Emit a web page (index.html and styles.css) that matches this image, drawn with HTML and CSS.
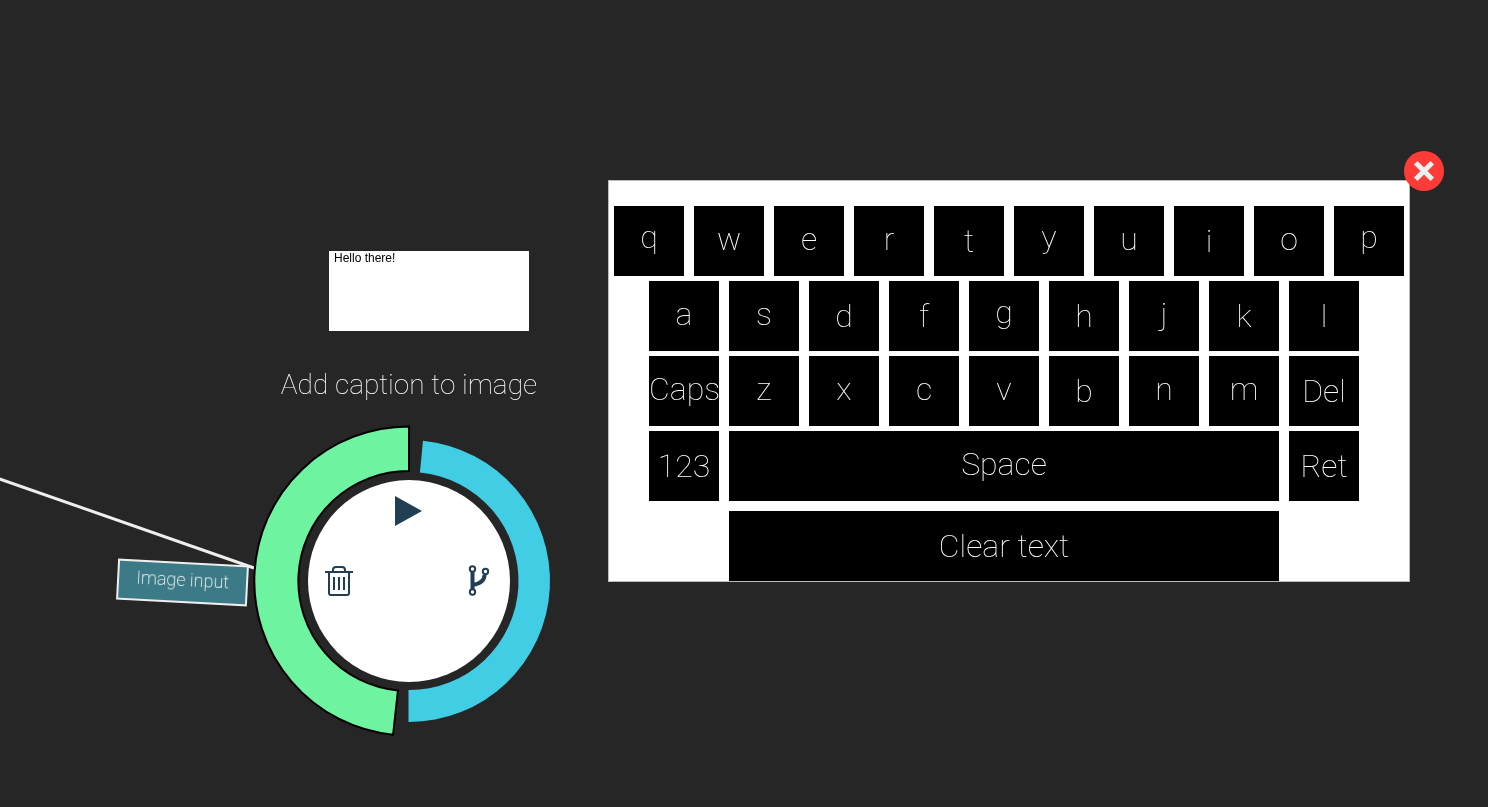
FILE: index.html
```
<!DOCTYPE html>
<html lang="en">
<head>
<meta charset="utf-8">
<title>Caption workspace</title>
<link rel="stylesheet" href="styles.css">
</head>
<body>
<main class="canvas">
  <svg class="wire" aria-hidden="true"><line x1="-3" y1="478" x2="254" y2="568"/></svg>

  <section class="node" aria-labelledby="node-title">
    <textarea class="caption" aria-label="Caption text">Hello there!</textarea>
    <h1 class="title" id="node-title">Add caption to image</h1>
    <div class="dial">
      <svg class="ring" viewBox="0 0 312 312" aria-hidden="true">
        <path class="ring-in" d="M156 1.500A154.500 154.500 0 0 0 140.100 309.700L144.900 265.500A110 110 0 0 1 156 46Z"/>
        <path class="ring-out" d="M170 15.700A141 141 0 0 1 155.500 297V265A109 109 0 0 0 166.900 47.500Z"/>
      </svg>
      <div class="hub">
        <button class="tool tool-run" aria-label="Run"><svg width="30" height="32" viewBox="0 0 30 32"><path fill="#213f52" d="M1 1L28 16L1 31Z"/></svg></button>
        <button class="tool tool-delete" aria-label="Delete"><svg width="30" height="32" viewBox="0 0 30 32" fill="none" stroke="#213f52" stroke-width="2"><path d="M1 7H29M9 7V5Q9 2 12 2H18Q21 2 21 5V7M5 7V28Q5 30 7 30H23Q25 30 25 28V7M10 12V25M15 12V25M20 12V25"/></svg></button>
        <button class="tool tool-branch" aria-label="Branch"><svg width="30" height="32" viewBox="0 0 30 32" fill="none" stroke="#213f52"><path stroke-width="4" d="M8.500 7V26M8.500 20Q20.500 18 20.500 10"/><g fill="#fff" stroke-width="2"><circle cx="8.500" cy="4" r="2.700"/><circle cx="21.500" cy="6.500" r="2.700"/><circle cx="8.500" cy="27" r="2.700"/></g></svg></button>
      </div>
    </div>
  </section>

  <button class="port">Image input</button>

  <section class="keyboard" aria-label="Keyboard">
    <div class="row row-wide">
      <button class="key key-desc">q</button><button class="key key-low">w</button><button class="key key-low">e</button><button class="key key-low">r</button><button class="key">t</button><button class="key key-desc">y</button><button class="key key-low">u</button><button class="key">i</button><button class="key key-low">o</button><button class="key key-desc">p</button>
    </div>
    <div class="row">
      <button class="key key-low">a</button><button class="key key-low">s</button><button class="key">d</button><button class="key">f</button><button class="key key-desc">g</button><button class="key">h</button><button class="key key-low">j</button><button class="key">k</button><button class="key">l</button>
    </div>
    <div class="row">
      <button class="key key-low">Caps</button><button class="key key-low">z</button><button class="key key-low">x</button><button class="key key-low">c</button><button class="key key-low">v</button><button class="key">b</button><button class="key key-low">n</button><button class="key key-low">m</button><button class="key">Del</button>
    </div>
    <div class="row">
      <button class="key">123</button><button class="key key-bar key-low">Space</button><button class="key">Ret</button>
    </div>
    <div class="row row-clear">
      <button class="key key-bar">Clear text</button>
    </div>
    <button class="close" aria-label="Close keyboard"><svg width="40" height="40" viewBox="0 0 40 40"><path d="M13.500 13.500L26.500 26.500M26.500 13.500L13.500 26.500"/></svg></button>
  </section>
</main>
</body>
</html>
```
FILE: styles.css
```
* { box-sizing: border-box; }

body {
  margin: 0;
  background: #262626;
  color: #fff;
  font-family: Roboto, Inter, "Liberation Sans", sans-serif;
  font-weight: 100;
}

button {
  margin: 0;
  padding: 0;
  border: 0;
  color: inherit;
  font: inherit;
  cursor: pointer;
}

.canvas {
  position: relative;
  min-height: 100vh;
  overflow: hidden;
}

/* Connection coming in from the node on the left */
.wire {
  position: absolute;
  inset: 0;
  width: 100%;
  height: 100%;
}

.wire line {
  stroke: #eee;
  stroke-width: 3;
}

/* Caption node */
.node {
  position: absolute;
  left: 253px;
  top: 251px;
  display: flex;
  flex-direction: column;
  align-items: center;
  will-change: transform;
}

.caption {
  width: 200px;
  height: 80px;
  margin-left: 40px;
  padding: 0 5px;
  border: 0;
  resize: none;
  background: #fff;
  color: #000;
  font: 12px/14px "Liberation Sans", sans-serif;
}

.title {
  margin: 34px 0 20px;
  font-size: 28px;
  line-height: 40px;
  font-weight: 100;
  white-space: nowrap;
}

.dial {
  display: grid;
  place-items: center;
}

.ring,
.hub {
  grid-area: 1 / 1;
}

.ring {
  width: 312px;
  height: 312px;
}

.ring-in {
  fill: #6ef3a0;
  stroke: #000;
  stroke-width: 2;
}

.ring-out {
  fill: #41cee5;
}

.hub {
  display: grid;
  grid-template: repeat(3, 70px) / repeat(3, 70px);
  place-content: center;
  place-items: center;
  width: 202px;
  height: 202px;
  border-radius: 50%;
  background: #fff;
}

.tool {
  display: flex;
  background: none;
}

.tool-run { grid-area: 1 / 2; }
.tool-delete { grid-area: 2 / 1; }
.tool-branch { grid-area: 2 / 3; }

.port {
  position: absolute;
  left: 117px;
  top: 562px;
  width: 131px;
  height: 41px;
  padding-bottom: 6px;
  border: 2px solid #eee;
  background: #3b7a86;
  font-size: 18px;
  font-weight: 200;
  transform: rotate(3deg);
  will-change: transform;
}

/* On-screen keyboard */
.keyboard {
  position: absolute;
  left: 608px;
  top: 180px;
  display: flex;
  flex-direction: column;
  gap: 5px;
  padding: 25px 5px 0;
  border: 1px solid #bbb;
  background: #fff;
  will-change: transform;
}

.row {
  display: flex;
  gap: 10px;
  padding: 0 45px 0 35px;
}

.row-wide { padding: 0; }

.row-clear {
  padding: 5px 125px 0 115px;
}

.key {
  flex: none;
  width: 70px;
  height: 70px;
  background: #000;
  font-size: 32px;
  line-height: 40px;
  white-space: nowrap;
}

.key-low { padding-bottom: 4px; }
.key-desc { padding-bottom: 8px; }
.key-bar { width: 550px; }

.close {
  position: absolute;
  top: -30px;
  right: -35px;
  display: flex;
  border-radius: 50%;
  background: #ff3b38;
}

.close path {
  stroke: #ecf0f1;
  stroke-width: 5;
  stroke-linecap: square;
}
```
